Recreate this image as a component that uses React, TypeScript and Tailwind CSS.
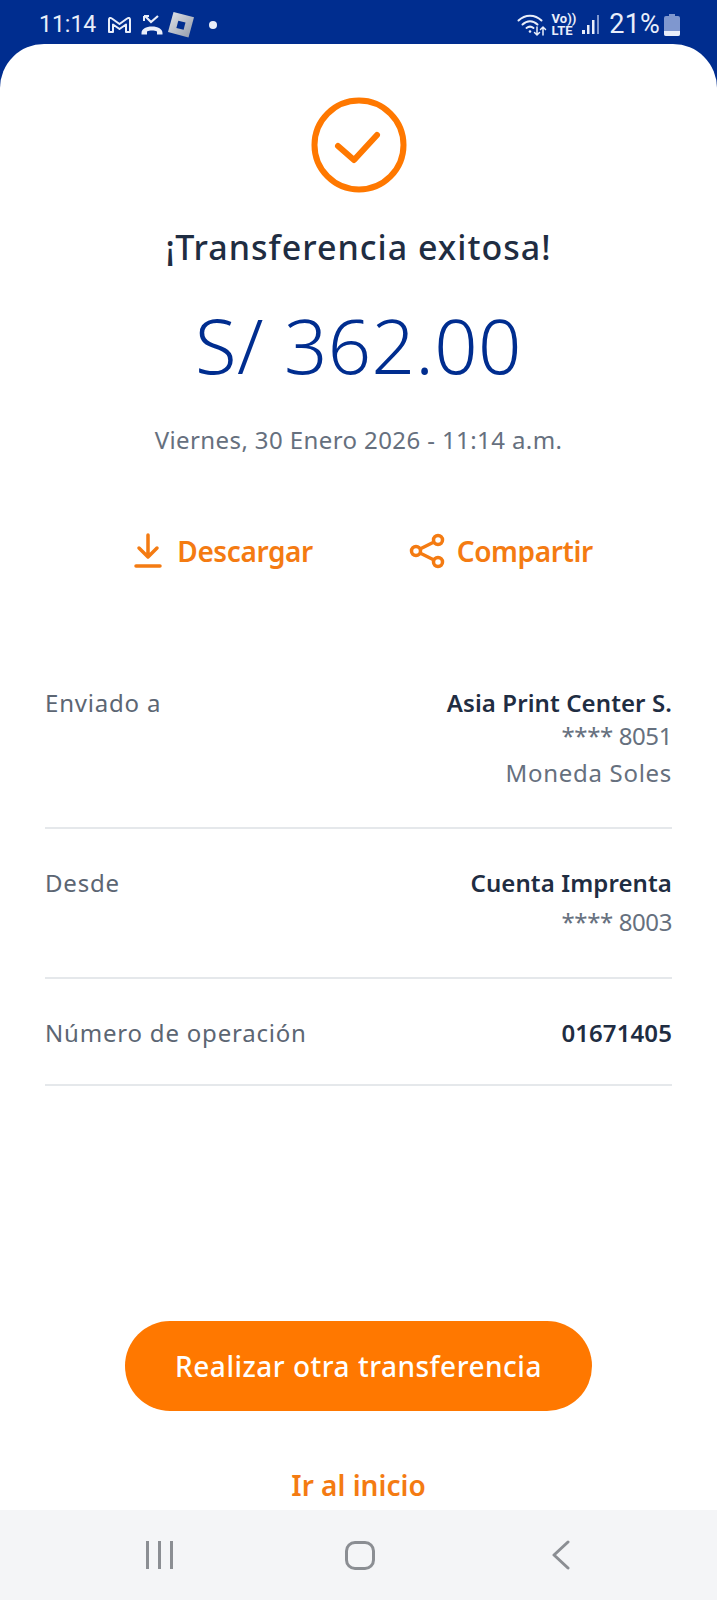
const font = "[font-family:'Noto_Sans',sans-serif]";

function StatusBar() {
  return (
    <div className="flex h-[44px] items-center justify-between pl-[39px] pr-[37px] pt-[5px] text-[#e9eefa] [font-family:'Roboto',sans-serif]">
      <div className="flex items-center">
        <span className="text-[23px] leading-none">11:14</span>
        <svg className="ml-[11px]" width="25" height="20" viewBox="0 0 25 20" fill="none" stroke="#e9eefa" strokeWidth="2">
          <path d="M2 17V4.500c0-1.500 1.500-2 2.500-1.200L12.500 9l8-5.700c1-.8 2.500-.3 2.500 1.200V17h-4V9.500l-6.500 4.500L6 9.500V17Z" strokeLinejoin="round" />
        </svg>
        <svg className="ml-[8px]" width="24" height="22" viewBox="0 0 24 22" fill="none" stroke="#e9eefa">
          <path d="M5 2l6 6 7-6" strokeWidth="2.200" />
          <path d="M4 2h5M4 2v5" strokeWidth="2" />
          <path d="M1.500 19c0-4 4.500-6.500 10.500-6.500s10.500 2.500 10.500 6.500v1.500h-5.500v-3c-1.500-.7-3-1-5-1s-3.500.3-5 1v3H1.500Z" fill="#e9eefa" stroke="none" />
        </svg>
        <svg className="ml-[3px]" width="28" height="27" viewBox="0 0 28 27">
          <defs>
            <linearGradient id="rb" x1="0" y1="0" x2="1" y2="1">
              <stop offset="0" stopColor="#e4e6ea" />
              <stop offset="1" stopColor="#8f98a8" />
            </linearGradient>
          </defs>
          <path d="M6.500 1 27 6.300 21.500 26.500 1 21Z" fill="url(#rb)" />
          <path d="M11.300 9.700 18.500 11.600 16.600 18.800 9.400 16.900Z" fill="#002d8f" />
        </svg>
        <span className="ml-[14px] h-[8px] w-[8px] rounded-full bg-[#e9eefa]" />
      </div>
      <div className="flex items-center">
        <svg width="30" height="24" viewBox="0 0 30 24" fill="none" stroke="#e9eefa" strokeWidth="2" strokeLinecap="round">
          <path d="M1.500 7.500C8 1 18 1 24.500 7.500" />
          <path d="M5.500 11.500c4.500-4.300 10.500-4.300 15 0" />
          <path d="M9.500 15c2.500-2 4.500-2 7 0" />
          <circle cx="13" cy="18.500" r="1.300" fill="#e9eefa" stroke="none" />
          <path d="M20 14v8M17.500 19.500 20 22l2.500-2.500" strokeWidth="1.500" />
          <path d="M26 22v-8M23.500 16.500 26 14l2.500 2.500" strokeWidth="1.500" />
        </svg>
        <div className="ml-[5px] flex flex-col text-[13px] font-bold leading-[12px]">
          <span>Vo))</span>
          <span>LTE</span>
        </div>
        <svg className="ml-[6px]" width="18" height="22" viewBox="0 0 18 22">
          <rect x="0" y="16" width="3" height="4" fill="#e9eefa" />
          <rect x="5" y="11" width="2.500" height="9" fill="#e9eefa" />
          <rect x="10" y="6" width="2.500" height="14" fill="#e9eefa" />
          <rect x="15" y="1" width="2" height="19" fill="#7f97cf" />
        </svg>
        <span className="ml-[9px] text-[27px] leading-none tracking-[0.2px]">21%</span>
        <svg className="ml-[4px]" width="16" height="22" viewBox="0 0 16 22">
          <path d="M5 0h6v2h3a2 2 0 0 1 2 2v16a2 2 0 0 1-2 2H2a2 2 0 0 1-2-2V4a2 2 0 0 1 2-2h3Z" fill="#7f97cf" />
          <path d="M0 17h16v3a2 2 0 0 1-2 2H2a2 2 0 0 1-2-2Z" fill="#e9eefa" />
        </svg>
      </div>
    </div>
  );
}

function DetailRow({ label, title, lines, className, linesClass = "" }: { label: string; title: string; lines: string[]; className: string; linesClass?: string }) {
  return (
    <div className={`flex justify-between border-b-2 border-[#e5e8eb] ${className}`}>
      <span className="text-[24px] leading-[28px] tracking-[0.8px] text-[#5c6673]">{label}</span>
      <div className="text-right">
        <div className="text-[24px] font-semibold leading-[28px] tracking-[0.1px] text-[#1f2d42]">{title}</div>
        <div className={linesClass}>
          {lines.map((line) => (
            <div
              key={line}
              className={`text-[24px] leading-[37px] text-[#66707e] ${line.startsWith("*") ? "tracking-[-0.4px]" : "tracking-[0.7px]"}`}
            >
              {line}
            </div>
          ))}
        </div>
      </div>
    </div>
  );
}

export default function App() {
  return (
    <div className={`flex h-[1600px] flex-col bg-[#002d8f] ${font}`}>
      <StatusBar />
      <main className="flex flex-1 flex-col items-center rounded-t-[44px] bg-white">
        <svg className="mt-[53px]" width="96" height="96" viewBox="0 0 96 96" fill="none" stroke="#ff7800">
          <circle cx="48" cy="48" r="44.500" strokeWidth="6" />
          <path d="M27 49 43 63 66 38" strokeWidth="6" strokeLinecap="round" strokeLinejoin="round" />
        </svg>
        <h1 className="mt-[29px] text-[34px] font-medium leading-[50px] tracking-[1px] text-[#1f2d42]">¡Transferencia exitosa!</h1>
        <div className="mt-[22px] text-[76px] font-light leading-[102px] tracking-[0.4px] text-[#002d8f]">S/ 362.00</div>
        <div className="mt-[26px] text-[24px] leading-[36px] tracking-[0.4px] text-[#66707e]">Viernes, 30 Enero 2026 - 11:14 a.m.</div>
        <div className="ml-[10px] mt-[68px] flex h-[50px] items-center text-[28px] font-semibold tracking-[-0.4px] text-[#f47b12]">
          <svg width="28" height="36" viewBox="0 0 28 36" fill="none" stroke="#f47b12" strokeWidth="3.500" strokeLinecap="round" strokeLinejoin="round">
            <path d="M14 2v21M5 15l9 9 9-9M2 33h24" />
          </svg>
          <span className="ml-[15px]">Descargar</span>
          <svg className="ml-[96px]" width="36" height="36" viewBox="0 0 36 36" fill="none" stroke="#f47b12" strokeWidth="3.500">
            <circle cx="29" cy="7" r="4.500" />
            <circle cx="29" cy="29" r="4.500" />
            <circle cx="7" cy="18" r="4.500" />
            <path d="M11 16 25 9M11 20l14 7" />
          </svg>
          <span className="ml-[12px]">Compartir</span>
        </div>
        <section className="mt-[113px] w-[627px]">
          <DetailRow label="Enviado a" title="Asia Print Center S." lines={["**** 8051", "Moneda Soles"]} className="pb-[36px]" />
          <DetailRow label="Desde" title="Cuenta Imprenta" lines={["**** 8003"]} linesClass="mt-[6px]" className="mt-[40px] pb-[37px]" />
          <DetailRow label="Número de operación" title="01671405" lines={[]} className="mt-[40px] pb-[37px]" />
        </section>
        <button className="mt-[235px] h-[90px] w-[467px] rounded-full bg-[#ff7800] text-[28px] font-medium tracking-[0.5px] text-white">
          Realizar otra transferencia
        </button>
        <a className="mt-[52px] text-[28px] font-semibold leading-[44px] text-[#f47b12]">Ir al inicio</a>
      </main>
      <nav className="flex h-[90px] items-center justify-between bg-[#f4f5f7] pl-[146px] pr-[147px]">
        <div className="flex gap-[9px]">
          <span className="h-[28px] w-[3px] bg-[#8b8e93]" />
          <span className="h-[28px] w-[3px] bg-[#8b8e93]" />
          <span className="h-[28px] w-[3px] bg-[#8b8e93]" />
        </div>
        <span className="mr-[5px] h-[29px] w-[30px] rounded-[10px] border-[3px] border-[#8b8e93]" />
        <svg width="18" height="30" viewBox="0 0 18 30" fill="none" stroke="#8b8e93" strokeWidth="3" strokeLinecap="round" strokeLinejoin="round">
          <path d="M16 2 2 15l14 13" />
        </svg>
      </nav>
    </div>
  );
}
